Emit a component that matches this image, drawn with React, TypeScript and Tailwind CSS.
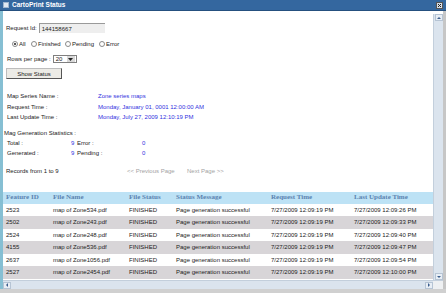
import React from 'react';

const rows = [
  { id: '2523', file: 'map of Zone534.pdf', done: '7/27/2009 12:09:26 PM' },
  { id: '2502', file: 'map of Zone243.pdf', done: '7/27/2009 12:09:33 PM' },
  { id: '2524', file: 'map of Zone248.pdf', done: '7/27/2009 12:09:40 PM' },
  { id: '4155', file: 'map of Zone536.pdf', done: '7/27/2009 12:09:47 PM' },
  { id: '2637', file: 'map of Zone1056.pdf', done: '7/27/2009 12:09:54 PM' },
  { id: '2527', file: 'map of Zone2454.pdf', done: '7/27/2009 12:10:00 PM' },
];

function Radio({ label, checked, w }: { label: string; checked?: boolean; w: string }) {
  return (
    <div className={`flex items-center ${w}`}>
      <span className="w-[6px] h-[6px] rounded-full border border-[#8a8a8a] bg-white flex items-center justify-center">
        {checked && <span className="w-[2px] h-[2px] rounded-full bg-[#222]" />}
      </span>
      <span className="ml-[1px]">{label}</span>
    </div>
  );
}

function Arrow({ dir }: { dir: 'up' | 'down' | 'left' | 'right' }) {
  const pts = {
    up: '1,4 3,2 5,4',
    down: '1,2 3,4 5,2',
    left: '4,1 2,3 4,5',
    right: '2,1 4,3 2,5',
  }[dir];
  return (
    <span className="w-[8px] h-[7px] bg-[#e8eef5] border border-[#b6c4d4] flex items-center justify-center">
      <svg width="6" height="6" viewBox="0 0 6 6">
        <polygon points={pts} fill="#3b5d8c" />
      </svg>
    </span>
  );
}

export default function App() {
  return (
    <div
      className="w-[446px] h-[293px] flex flex-col bg-white text-[6px] leading-none text-[#222] overflow-hidden"
      style={{ fontFamily: '"Liberation Sans", Arial, sans-serif' }}
    >
      {/* title bar */}
      <div className="h-[11px] bg-[#34679f] border-b border-[#25507f] flex items-center px-[3px]">
        <span className="w-[6px] h-[6px] bg-[#dfe8f2] border border-[#9fb5cf]" />
        <span className="ml-[3px] text-white font-bold text-[6.5px]">CartoPrint Status</span>
        <span className="ml-auto w-[7px] h-[7px] bg-[#d8dee6] border border-[#555] flex items-center justify-center">
          <svg width="5" height="5" viewBox="0 0 5 5">
            <path d="M1 1 L4 4 M4 1 L1 4" stroke="#222" strokeWidth="1" />
          </svg>
        </span>
      </div>

      <div className="flex-1 flex min-h-0">
        <div className="w-[3px] bg-[#86bfd3]" />
        <div className="flex-1 flex flex-col min-w-0">
          <div className="flex-1 flex min-h-0">
            <div className="flex-1 min-w-0 flex flex-col overflow-hidden">
              <div className="pl-[3px]">
                <div className="mt-[12px] h-[10px] flex items-center">
                  <span>Request Id:</span>
                  <span className="ml-[2px] w-[66px] h-[10px] bg-[#eeeeee] border-t border-l border-[#9a9a9a] flex items-center pl-[2px]">
                    144158667
                  </span>
                </div>
                <div className="mt-[6px] h-[10px] flex items-center pl-[6px]">
                  <Radio label="All" checked w="w-[19px]" />
                  <Radio label="Finished" w="w-[34px]" />
                  <Radio label="Pending" w="w-[34px]" />
                  <Radio label="Error" w="w-[30px]" />
                </div>
                <div className="mt-[5px] h-[10px] flex items-center pl-[1px]">
                  <span>Rows per page :</span>
                  <span className="ml-[2px] w-[24px] h-[8px] bg-white border border-[#7f7f7f] flex items-center">
                    <span className="pl-[2px] flex-1">20</span>
                    <span className="w-[8px] h-[6px] mr-[1px] bg-[#d8d8d8] flex items-center justify-center">
                      <svg width="5" height="3" viewBox="0 0 5 3">
                        <polygon points="0,0 5,0 2.5,3" fill="#222" />
                      </svg>
                    </span>
                  </span>
                </div>
                <div className="mt-[4px] h-[11px] flex">
                  <span className="w-[56px] h-[11px] bg-[#ecebe6] border border-[#bdbdbd] border-r-[#555] border-b-[#555] flex items-center justify-center">
                    Show Status
                  </span>
                </div>

                <div className="mt-[12px] pl-[1px]">
                  <div className="h-[10.5px] flex items-center">
                    <span className="w-[91px]">Map Series Name :</span>
                    <span className="text-[#3232e0]">Zone series maps</span>
                  </div>
                  <div className="h-[10.5px] flex items-center">
                    <span className="w-[91px]">Request Time :</span>
                    <span className="text-[#3232e0]">Monday, January 01, 0001 12:00:00 AM</span>
                  </div>
                  <div className="h-[10.5px] flex items-center">
                    <span className="w-[91px]">Last Update Time :</span>
                    <span className="text-[#3232e0]">Monday, July 27, 2009 12:10:19 PM</span>
                  </div>
                </div>

                <div className="mt-[5px] h-[10px] flex items-center -ml-[2px]">Mag Generation Statistics :</div>
                <div className="h-[10px] flex items-center pl-[1px]">
                  <span className="w-[64px]">Total :</span>
                  <span className="w-[6px] text-[#3232e0]">9</span>
                  <span className="w-[65px]">Error :</span>
                  <span className="text-[#3232e0]">0</span>
                </div>
                <div className="h-[10px] flex items-center pl-[1px]">
                  <span className="w-[64px]">Generated :</span>
                  <span className="w-[6px] text-[#3232e0]">9</span>
                  <span className="w-[65px]">Pending :</span>
                  <span className="text-[#3232e0]">0</span>
                </div>

                <div className="mt-[8px] h-[10px] flex items-center">
                  <span className="w-[121px]">Records from 1 to 9</span>
                  <span className="w-[60px] text-[#a3a3a3]">&lt;&lt; Previous Page</span>
                  <span className="text-[#a3a3a3]">Next Page &gt;&gt;</span>
                </div>
              </div>

              {/* table */}
              <div className="mt-[16px]">
                <div
                  className="h-[12px] bg-[#bde2f5] flex items-center pl-[3px] font-bold text-[7px] text-[#5b82b0]"
                  style={{ fontFamily: '"Liberation Serif", "Times New Roman", serif' }}
                >
                  <span className="w-[47px]">Feature ID</span>
                  <span className="w-[76px]">File Name</span>
                  <span className="w-[47px]">File Status</span>
                  <span className="w-[95px]">Status Message</span>
                  <span className="w-[83px]">Request Time</span>
                  <span>Last Update Time</span>
                </div>
                {rows.map((r, i) => (
                  <div
                    key={r.id}
                    className={`h-[12.5px] flex items-center pl-[3px] ${i % 2 === 1 ? 'bg-[#d8d5d8]' : 'bg-white'}`}
                  >
                    <span className="w-[47px]">{r.id}</span>
                    <span className="w-[76px]">{r.file}</span>
                    <span className="w-[47px]">FINISHED</span>
                    <span className="w-[95px]">Page generation successful</span>
                    <span className="w-[83px]">7/27/2009 12:09:19 PM</span>
                    <span>{r.done}</span>
                  </div>
                ))}
              </div>
            </div>

            {/* vertical scrollbar */}
            <div className="w-[10px] mt-[3px] bg-[#dbe4ee] border-l border-[#c3cfdc] flex flex-col justify-between items-center">
              <Arrow dir="up" />
              <Arrow dir="down" />
            </div>
          </div>

          {/* horizontal scrollbar */}
          <div className="h-[9px] flex items-center bg-[#dbe4ee] border-t border-[#c3cfdc]">
            <Arrow dir="left" />
            <div className="flex-1" />
            <Arrow dir="right" />
            <div className="w-[10px] h-full bg-[#eef0f2]" />
          </div>
        </div>
        <div className="w-[3px] bg-[#c6c6c6]" />
      </div>
      <div className="h-[4px] bg-[#d0d0d0]" />
    </div>
  );
}
